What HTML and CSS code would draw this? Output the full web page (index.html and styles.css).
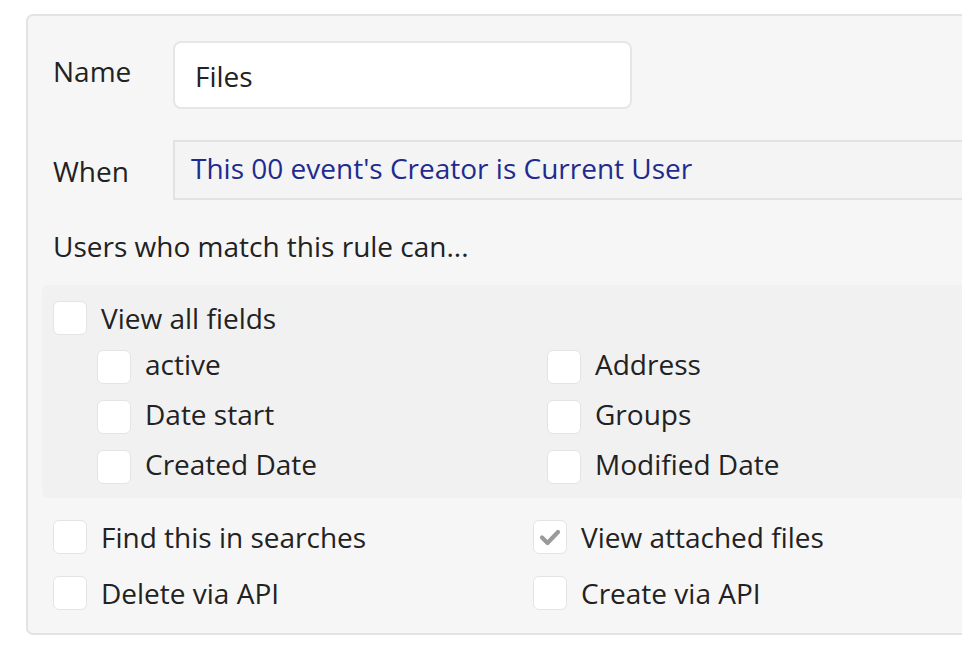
FILE: index.html
```html
<!DOCTYPE html>
<html>
<head>
<meta charset="utf-8">
<link rel="stylesheet" href="styles.css">
</head>
<body>
<div class="panel">
  <div class="row name-row">
    <div class="label">Name</div>
    <div class="input">Files</div>
  </div>
  <div class="row when-row">
    <div class="label">When</div>
    <div class="cond">This 00 event's Creator is Current User</div>
  </div>
  <div class="intro">Users who match this rule can...</div>
  <div class="fields">
    <label class="cb-row"><span class="cb"></span><span>View all fields</span></label>
    <div class="field-grid">
      <label class="cb-row"><span class="cb"></span><span class="txt">active</span></label>
      <label class="cb-row"><span class="cb"></span><span class="txt">Address</span></label>
      <label class="cb-row"><span class="cb"></span><span class="txt">Date start</span></label>
      <label class="cb-row"><span class="cb"></span><span class="txt">Groups</span></label>
      <label class="cb-row"><span class="cb"></span><span class="txt">Created Date</span></label>
      <label class="cb-row"><span class="cb"></span><span class="txt">Modified Date</span></label>
    </div>
  </div>
  <div class="perm-grid">
    <label class="cb-row"><span class="cb"></span><span>Find this in searches</span></label>
    <label class="cb-row"><span class="cb checked"><svg viewBox="0 0 24 24" width="24" height="24"><path d="M4 12.5 L9.5 18 L20 7" fill="none" stroke="#9a9a9a" stroke-width="4.2" stroke-linecap="round" stroke-linejoin="round"/></svg></span><span>View attached files</span></label>
    <label class="cb-row"><span class="cb"></span><span>Delete via API</span></label>
    <label class="cb-row"><span class="cb"></span><span>Create via API</span></label>
  </div>
</div>
</body>
</html>
```
FILE: styles.css
```css
html, body {
  margin: 0;
  padding: 0;
  background: #ffffff;
}
body {
  font-family: "Open Sans", "Liberation Sans", sans-serif;
  font-size: 28px;
  line-height: 38px;
  color: #222222;
  overflow: hidden;
  width: 962px;
  height: 652px;
}
.panel {
  margin: 14px 0 0 26px;
  width: 1000px;
  height: 621px;
  box-sizing: border-box;
  background: #f6f6f6;
  border: 2px solid #e3e3e3;
  border-radius: 7px;
  padding: 25px 0 0 0;
}
.row {
  display: flex;
  align-items: center;
}
.label {
  width: 145px;
  padding-left: 25px;
  box-sizing: border-box;
}
.name-row .label {
  align-self: flex-start;
  padding-top: 11px;
}
.input {
  width: 459px;
  height: 68px;
  box-sizing: border-box;
  background: #ffffff;
  border: 2px solid #e6e6e6;
  border-radius: 8px;
  padding-left: 20px;
  display: flex;
  align-items: center;
  padding-top: 2px;
}
.when-row {
  margin-top: 31px;
}
.when-row .label {
  padding-top: 2px;
}
.cond {
  flex: 1;
  height: 60px;
  box-sizing: border-box;
  background: #f4f4f4;
  border: 2px solid #e2e2e2;
  border-right: none;
  padding-left: 16px;
  display: flex;
  align-items: center;
  color: #1f2b8e;
  padding-bottom: 4px;
}
.intro {
  padding-left: 25px;
  margin-top: 27px;
}
.fields {
  margin: 20px 0 0 14px;
  background: #f1f1f1;
  border-radius: 6px 0 0 6px;
  padding: 16px 0 14px 11px;
}
.cb-row {
  display: flex;
  align-items: center;
  gap: 14px;
  height: 34px;
}
.cb {
  width: 34px;
  height: 34px;
  box-sizing: border-box;
  background: #ffffff;
  border: 1.5px solid #e4e4e4;
  border-radius: 6px;
  flex: none;
  display: flex;
  align-items: center;
  justify-content: center;
}
.field-grid {
  display: grid;
  grid-template-columns: 450px 1fr;
  row-gap: 16px;
  margin: 15px 0 0 44px;
}
.field-grid .txt {
  margin-bottom: 6px;
}
.perm-grid {
  display: grid;
  grid-template-columns: 480px 1fr;
  row-gap: 22px;
  margin: 22px 0 0 25px;
}
```
